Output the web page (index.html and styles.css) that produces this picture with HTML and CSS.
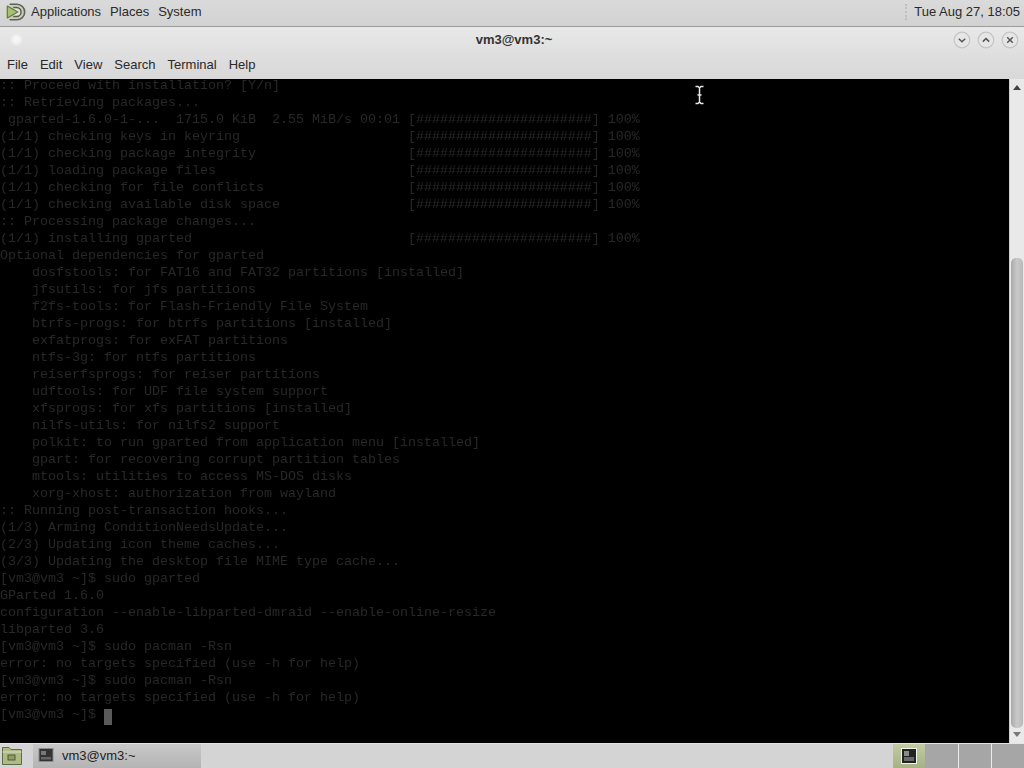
FILE: index.html
```html
<!DOCTYPE html>
<html lang="en">
<head>
<meta charset="utf-8">
<title>vm3@vm3:~</title>
<link rel="stylesheet" href="styles.css">
</head>
<body>
<header class="panel">
  <svg class="logo" viewBox="0 0 24 24" aria-hidden="true">
    <path d="M5 3.5 H13 A8.5 8.5 0 0 1 13 20.5 H5" fill="#c9cdb9" stroke="#5f6256" stroke-width="1.8"/>
    <path d="M9 7 H12.5 A5 5 0 0 1 12.5 17 H9" fill="#e2e4d8" stroke="#55584c" stroke-width="1.6"/>
    <path d="M2.5 5.5 L14 12 L2.5 18.5 Z" fill="#a8c070" stroke="#5f7a42" stroke-width="1.3" stroke-linejoin="round"/>
  </svg>
  <nav class="panel-menu"><span>Applications</span><span>Places</span><span>System</span></nav>
  <div class="panel-right"><span class="grip"></span><span class="clock">Tue Aug 27, 18:05</span></div>
</header>

<main class="window">
  <div class="titlebar">
    <span class="win-glow"></span>
    <span class="win-title">vm3@vm3:~</span>
    <div class="win-buttons">
      <svg class="win-btn" viewBox="0 0 18 18" aria-hidden="true"><circle cx="9" cy="9" r="7.8"/><path d="M5.8 7.8 L9 10.8 L12.2 7.8"/></svg>
      <svg class="win-btn" viewBox="0 0 18 18" aria-hidden="true"><circle cx="9" cy="9" r="7.8"/><path d="M5.8 10.6 L9 7.6 L12.2 10.6"/></svg>
      <svg class="win-btn" viewBox="0 0 18 18" aria-hidden="true"><circle cx="9" cy="9" r="7.8"/><path d="M6.2 6.2 L11.8 11.8 M11.8 6.2 L6.2 11.8"/></svg>
    </div>
  </div>
  <nav class="menubar"><span>File</span><span>Edit</span><span>View</span><span>Search</span><span>Terminal</span><span>Help</span></nav>
  <div class="term-row">
    <div class="terminal">
<pre class="output">:: Proceed with installation? [Y/n]
:: Retrieving packages...
 gparted-1.6.0-1-...  1715.0 KiB  2.55 MiB/s 00:01 [######################] 100%
(1/1) checking keys in keyring                     [######################] 100%
(1/1) checking package integrity                   [######################] 100%
(1/1) loading package files                        [######################] 100%
(1/1) checking for file conflicts                  [######################] 100%
(1/1) checking available disk space                [######################] 100%
:: Processing package changes...
(1/1) installing gparted                           [######################] 100%
Optional dependencies for gparted
    dosfstools: for FAT16 and FAT32 partitions [installed]
    jfsutils: for jfs partitions
    f2fs-tools: for Flash-Friendly File System
    btrfs-progs: for btrfs partitions [installed]
    exfatprogs: for exFAT partitions
    ntfs-3g: for ntfs partitions
    reiserfsprogs: for reiser partitions
    udftools: for UDF file system support
    xfsprogs: for xfs partitions [installed]
    nilfs-utils: for nilfs2 support
    polkit: to run gparted from application menu [installed]
    gpart: for recovering corrupt partition tables
    mtools: utilities to access MS-DOS disks
    xorg-xhost: authorization from wayland
:: Running post-transaction hooks...
(1/3) Arming ConditionNeedsUpdate...
(2/3) Updating icon theme caches...
(3/3) Updating the desktop file MIME type cache...
[vm3@vm3 ~]$ sudo gparted
GParted 1.6.0
configuration --enable-libparted-dmraid --enable-online-resize
libparted 3.6
[vm3@vm3 ~]$ sudo pacman -Rsn
error: no targets specified (use -h for help)
[vm3@vm3 ~]$ sudo pacman -Rsn
error: no targets specified (use -h for help)
[vm3@vm3 ~]$ <span class="cursor"> </span></pre>
    </div>
    <div class="scrollbar">
      <span class="arrow up"></span>
      <div class="track"><div class="thumb"></div></div>
      <span class="arrow down"></span>
    </div>
  </div>
  <svg class="ibeam" viewBox="0 0 11 20" aria-hidden="true">
    <path d="M1.5 1.5 H4 L5.5 3 L7 1.5 H9.5 M5.5 3 V17 M1.5 18.5 H4 L5.5 17 L7 18.5 H9.5 M3.5 10 H7.5" />
  </svg>
</main>

<footer class="taskbar">
  <svg class="show-desktop" viewBox="0 0 22 20" aria-hidden="true">
    <path d="M1.5 1.5 H8 L10 3.5 H20.5 V18.5 H1.5 Z" fill="#aebb82" stroke="#5d6b48"/>
    <path d="M1.5 6 H20.5" stroke="#dbe2c4" fill="none"/>
    <rect x="7" y="9" width="7" height="5" fill="#8f9c68" stroke="#4f5c3c"/>
  </svg>
  <span class="task-sep"></span>
  <div class="task-button">
    <svg class="term-icon" viewBox="0 0 16 16" aria-hidden="true">
      <rect x="1" y="1.5" width="14" height="13" fill="#333" stroke="#8a8a8a"/>
      <rect x="3" y="4" width="5" height="4" fill="#777"/>
      <rect x="3" y="10" width="10" height="2.5" fill="#666"/>
    </svg>
    <span class="task-label">vm3@vm3:~</span>
  </div>
  <div class="workspaces">
    <div class="ws active">
      <svg class="ws-icon" viewBox="0 0 16 16" aria-hidden="true">
        <rect x="0.5" y="0.5" width="15" height="15" fill="#222" stroke="#f2f4ea"/>
        <rect x="3" y="3" width="5" height="5" fill="#8a8a8a"/>
        <rect x="3" y="9" width="10" height="4" fill="#6a6a6a"/>
      </svg>
    </div>
    <div class="ws"></div>
    <div class="ws"></div>
    <div class="ws"></div>
  </div>
</footer>
</body>
</html>
```
FILE: styles.css
```css
* { box-sizing: border-box; }
html, body { margin: 0; padding: 0; height: 100%; }
body {
  width: 1024px;
  height: 768px;
  overflow: hidden;
  display: flex;
  flex-direction: column;
  font-family: "Liberation Sans", Arial, sans-serif;
  font-size: 13px;
  color: #2a2a2a;
  background: #d6d6d6;
}

/* top panel */
.panel {
  height: 27px;
  flex: none;
  display: flex;
  align-items: center;
  padding-left: 5px;
  padding-right: 4px;
  padding-bottom: 3px;
  background: linear-gradient(#dadada, #d2d2d2);
  border-bottom: 1px solid #9c9c9c;
}
.logo { width: 22px; height: 22px; flex: none; }
.panel-menu { display: flex; gap: 9px; margin-left: 4px; }
.panel-right { margin-left: auto; display: flex; align-items: center; gap: 7px; }
.grip { width: 2px; height: 16px; border-left: 2px dotted #c0c0c0; }

/* window */
.window { flex: 1; min-height: 0; display: flex; flex-direction: column; position: relative; }
.titlebar {
  height: 26px;
  flex: none;
  position: relative;
  display: flex;
  align-items: center;
  justify-content: center;
  padding-left: 4px;
  padding-bottom: 2px;
  background: linear-gradient(#e9e9e9, #dfdfdf);
}
.win-title { font-weight: bold; font-size: 13px; color: #333; }
.win-glow {
  position: absolute;
  left: 10px;
  top: 6px;
  width: 13px;
  height: 13px;
  border-radius: 50%;
  background: radial-gradient(circle, #f6f6f6 25%, #e4e4e4 75%);
}
.win-buttons {
  position: absolute;
  right: 5px;
  top: 4px;
  display: flex;
  gap: 6px;
}
.win-btn { width: 18px; height: 18px; }
.win-btn circle { fill: #e6e6e6; stroke: #c4c4c4; stroke-width: 1.2; }
.win-btn path { fill: none; stroke: #555; stroke-width: 1.5; }

.menubar {
  height: 26px;
  flex: none;
  display: flex;
  align-items: center;
  gap: 12px;
  padding-left: 7px;
  padding-bottom: 3px;
  background: linear-gradient(#dfdfdf, #d8d8d8);
}

.term-row { flex: 1; min-height: 0; display: flex; }
.terminal {
  width: 1009px;
  flex: none;
  background: #000;
  overflow: hidden;
  display: flex;
  flex-direction: column;
  justify-content: flex-end;
  padding-bottom: 18px;
}
.output {
  margin: 0;
  font-family: "Liberation Mono", "Courier New", monospace;
  font-size: 13.33px;
  line-height: 17px;
  color: #282828;
  filter: blur(0.7px);
}
.cursor { display: inline-block; width: 8px; height: 16px; background: #5a5a5a; vertical-align: -3px; }

/* scrollbar */
.scrollbar {
  flex: 1;
  display: flex;
  flex-direction: column;
  align-items: center;
  background: #e9e9e9;
  border-left: 1px solid #cfcfcf;
}
.arrow { width: 0; height: 0; flex: none; border-left: 4px solid transparent; border-right: 4px solid transparent; }
.arrow.up { border-bottom: 5px solid #444; margin-top: 6px; }
.arrow.down { border-top: 5px solid #777; margin-bottom: 6px; }
.track { flex: 1; width: 100%; display: flex; flex-direction: column; padding: 168px 1px 4px; }
.thumb {
  flex: 1;
  border-radius: 5px;
  background: linear-gradient(90deg, #a9a9a9, #c9c9c9 50%, #b9b9b9);
}
.ibeam {
  position: absolute;
  left: 694px;
  top: 58px;
  width: 11px;
  height: 20px;
  fill: none;
  stroke: #e8e8e8;
  stroke-width: 1.5;
}

/* bottom taskbar */
.taskbar {
  height: 25px;
  flex: none;
  display: flex;
  align-items: stretch;
  background: #d4d4d4;
  border-top: 1px solid #e4e4e4;
}
.show-desktop { width: 22px; height: 20px; margin: 2px 0 0 1px; flex: none; }
.task-sep { width: 10px; flex: none; }
.task-button {
  width: 168px;
  display: flex;
  align-items: center;
  gap: 8px;
  padding-left: 5px;
  padding-bottom: 2px;
  background: linear-gradient(#c8c8c8, #b4b4b4);
  color: #222;
}
.task-label { font-size: 13px; }
.term-icon { width: 16px; height: 16px; flex: none; }
.workspaces { margin-left: auto; display: flex; width: 131px; }
.ws { flex: 1; background: #a6a6a6; border-right: 1px solid #ececec; }
.ws:last-child { border-right: 0; }
.ws.active {
  display: flex;
  align-items: center;
  justify-content: center;
  background: linear-gradient(#c2cba4, #a6b184);
  border-right: 0;
}
.ws-icon { width: 16px; height: 16px; }
```
